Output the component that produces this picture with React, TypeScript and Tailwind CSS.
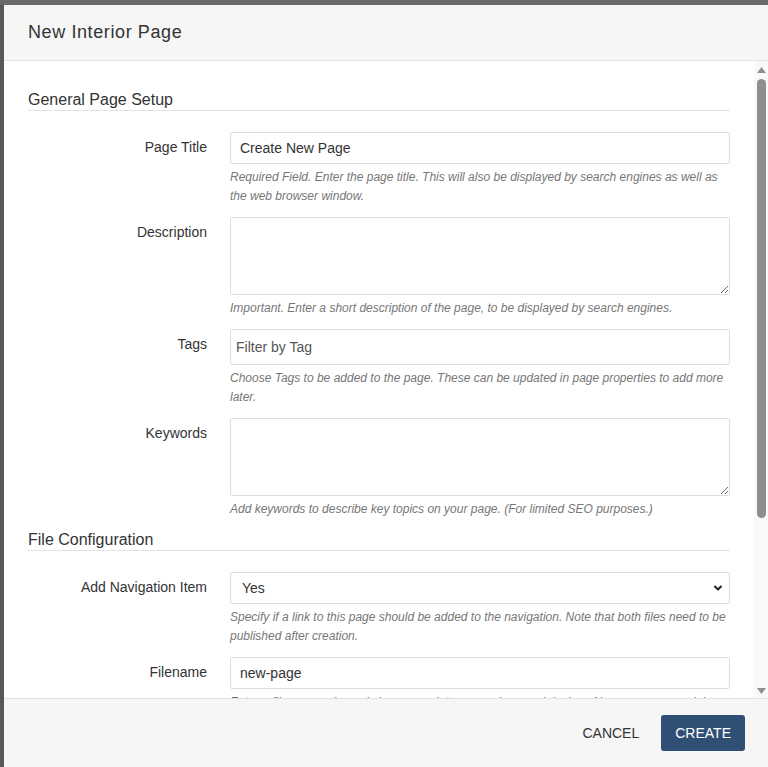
import { ChevronDown } from 'lucide-react';

type Field = {
  label: string;
  kind: 'input' | 'textarea' | 'select' | 'tags';
  value?: string;
  help: string;
};

const general: Field[] = [
  {
    label: 'Page Title',
    kind: 'input',
    value: 'Create New Page',
    help: 'Required Field. Enter the page title. This will also be displayed by search engines as well as the web browser window.',
  },
  {
    label: 'Description',
    kind: 'textarea',
    help: 'Important. Enter a short description of the page, to be displayed by search engines.',
  },
  {
    label: 'Tags',
    kind: 'tags',
    help: 'Choose Tags to be added to the page. These can be updated in page properties to add more later.',
  },
  {
    label: 'Keywords',
    kind: 'textarea',
    help: 'Add keywords to describe key topics on your page. (For limited SEO purposes.)',
  },
];

const fileConfig: Field[] = [
  {
    label: 'Add Navigation Item',
    kind: 'select',
    value: 'Yes',
    help: 'Specify if a link to this page should be added to the navigation. Note that both files need to be published after creation.',
  },
  {
    label: 'Filename',
    kind: 'input',
    value: 'new-page',
    help: 'Enter a filename using only lowercase letters, numbers and dashes. No spaces or special characters.',
  },
];

const SectionTitle = ({ title }: { title: string }) => (
  <h2 className="mb-[21px] border-b border-[#e3e3e3] text-[16px] leading-[20px] text-[#333]">
    {title}
  </h2>
);

const FormRow = ({ field }: { field: Field }) => {
  const base =
    'w-full rounded-[2px] border border-[#dedede] bg-white text-[14px] text-[#333] outline-none [font-family:inherit]';

  return (
    <div className="mb-[11px] grid grid-cols-[179px_1fr] gap-x-[23px]">
      <label className="pt-[5px] text-right text-[14px] leading-[20px] text-[#333]">
        {field.label}
      </label>
      <div>
        {field.kind === 'input' && (
          <input className={`${base} h-[32px] px-[9px]`} defaultValue={field.value} />
        )}
        {field.kind === 'tags' && (
          <input
            className={`${base} h-[36px] px-[5px] placeholder:text-[#555]`}
            placeholder="Filter by Tag"
          />
        )}
        {field.kind === 'textarea' && <textarea className={`${base} block h-[78px] px-[9px] py-[6px]`} />}
        {field.kind === 'select' && (
          <div className="relative">
            <select className={`${base} h-[32px] appearance-none pl-[11px]`} defaultValue="Yes">
              <option>Yes</option>
              <option>No</option>
            </select>
            {/* custom chevron like the native one */}
            <ChevronDown
              className="pointer-events-none absolute right-[6px] top-[10px] h-[12px] w-[12px] text-[#222]"
              strokeWidth={4}
            />
          </div>
        )}
        <p className="mt-[4px] text-[12px] italic leading-[19px] text-[#777]">{field.help}</p>
      </div>
    </div>
  );
};

const ScrollBar = () => (
  <div className="flex w-[14px] shrink-0 flex-col items-center bg-[#f9f9f9] pl-[1px]">
    <svg className="mt-[6px]" width="9" height="6" viewBox="0 0 9 6">
      <polygon points="4.5,0 9,6 0,6" fill="#8e8e8e" />
    </svg>
    <div className="mt-[6px] h-[439px] w-[9px] rounded-full bg-[#8e8e8e]" />
    <div className="flex-1" />
    <svg className="mb-[4px]" width="9" height="6" viewBox="0 0 9 6">
      <polygon points="0,0 9,0 4.5,6" fill="#8e8e8e" />
    </svg>
  </div>
);

export default function App() {
  return (
    <div className="h-[767px] w-[768px] overflow-hidden border-t-[5px] border-t-[#6a6a6a] bg-[#585858] pl-[4px] [font-family:'Liberation_Sans',Arial,sans-serif]">
      <div className="flex h-full flex-col bg-white">
        {/* Header */}
        <div className="flex h-[56px] shrink-0 items-center border-b border-[#e3e3e3] bg-[#f6f6f6] px-[24px]">
          <h1 className="text-[18px] tracking-[0.6px] text-[#333]">New Interior Page</h1>
        </div>

        {/* Body */}
        <div className="flex min-h-0 flex-1">
          <div className="min-w-0 flex-1 overflow-hidden px-[24px] pt-[29px]">
            <SectionTitle title="General Page Setup" />
            {general.map((f) => (
              <FormRow key={f.label} field={f} />
            ))}
            <SectionTitle title="File Configuration" />
            {fileConfig.map((f) => (
              <FormRow key={f.label} field={f} />
            ))}
          </div>
          <ScrollBar />
        </div>

        {/* Footer */}
        <div className="flex h-[69px] shrink-0 items-center justify-end gap-[10px] border-t border-[#e0e0e0] bg-[#f6f6f6] pr-[23px]">
          <button className="h-[36px] px-[12px] text-[14px] text-[#333] [font-family:inherit]">CANCEL</button>
          <button className="h-[36px] rounded-[3px] bg-[#304f75] px-[14px] text-[14px] text-white [font-family:inherit]">
            CREATE
          </button>
        </div>
      </div>
    </div>
  );
}
